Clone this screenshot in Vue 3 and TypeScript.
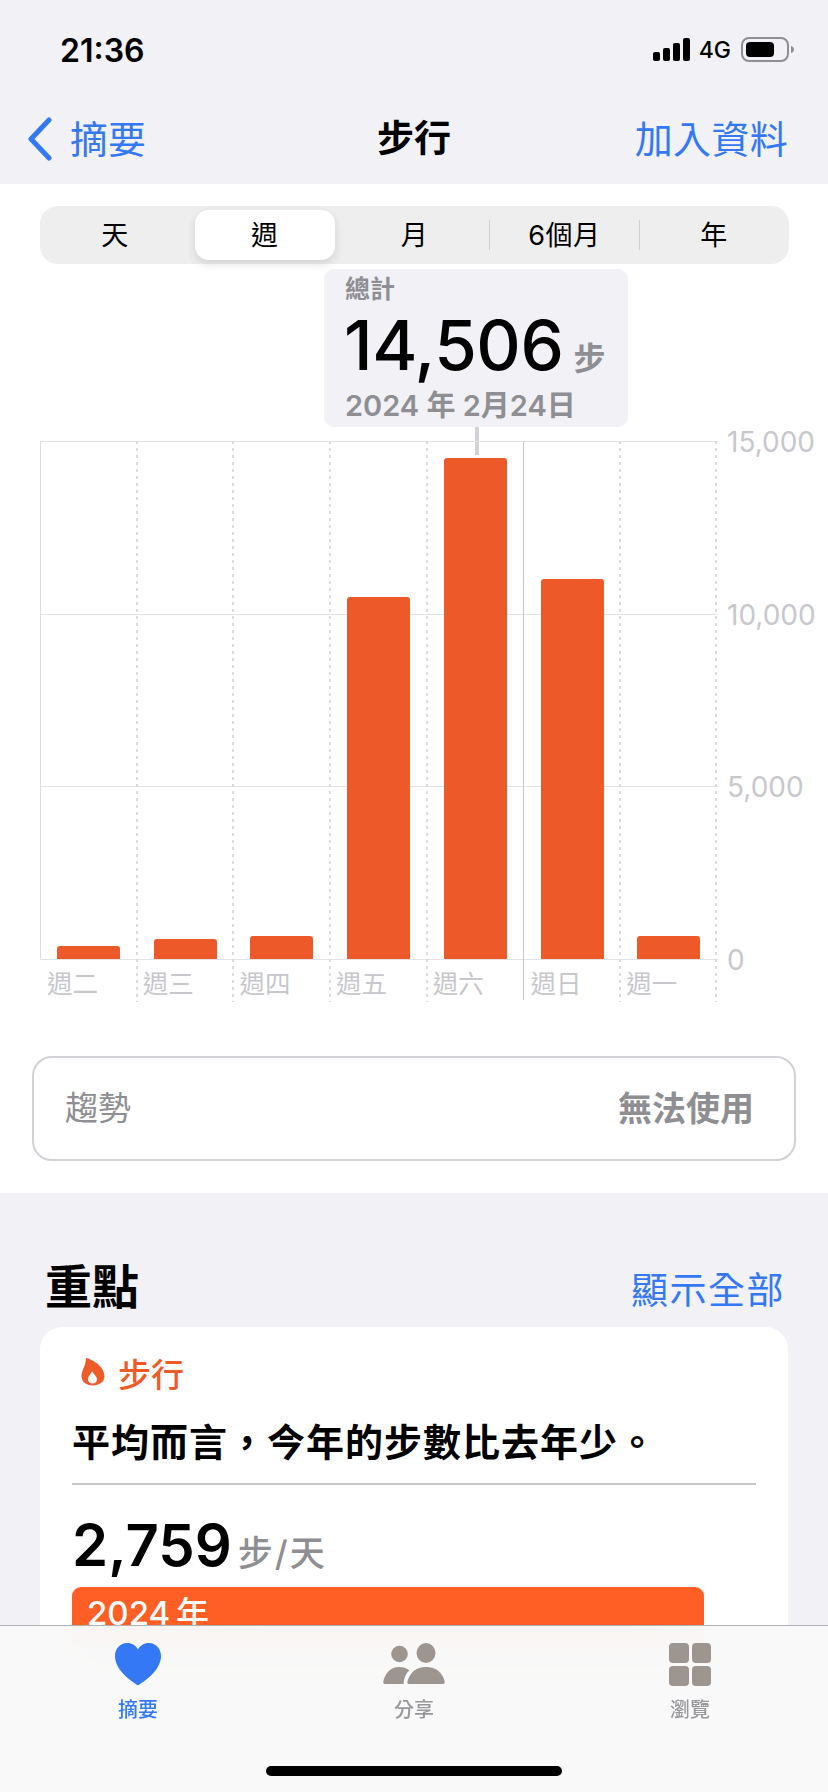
<template>
  <div class="phone">
    <header class="top">
      <div class="status">
        <span class="time">21:36</span>
        <div class="status-right">
          <svg class="signal" width="37" height="24" viewBox="0 0 37 24">
            <rect x="0" y="14" width="7" height="9" rx="2" />
            <rect x="10" y="10" width="7" height="13" rx="2" />
            <rect x="20" y="5" width="7" height="18" rx="2" />
            <rect x="30" y="0" width="7" height="23" rx="2" />
          </svg>
          <span class="net">4G</span>
          <svg class="battery" width="54" height="26" viewBox="0 0 54 26">
            <rect x="1" y="1" width="46" height="23" rx="7" fill="none" stroke="#8e8e93" stroke-width="2" />
            <rect x="5" y="5" width="28" height="15" rx="4" fill="#000" />
            <path d="M50 9c2 .6 3 2 3 3.500s-1 3-3 3.500z" fill="#8e8e93" />
          </svg>
        </div>
      </div>
      <nav class="nav">
        <div class="back">
          <svg width="27" height="44" viewBox="0 0 27 44">
            <path d="M23 3 5 22l18 19" fill="none" stroke="#3478f6" stroke-width="5" stroke-linecap="round" stroke-linejoin="round" />
          </svg>
          <span>摘要</span>
        </div>
        <strong class="nav-title">步行</strong>
        <span class="nav-action">加入資料</span>
      </nav>
    </header>

    <section class="chart-section">
      <div class="segments">
        <div
          v-for="(seg, i) in segments"
          :key="seg"
          class="seg"
          :class="{ active: i === 1, divided: i === 3 || i === 4 }"
        >
          <span>{{ seg }}</span>
        </div>
      </div>

      <div class="tooltip">
        <div class="tip-label">總計</div>
        <div class="tip-value">14,506<span class="tip-unit">步</span></div>
        <div class="tip-date">2024 年 2月24日</div>
      </div>

      <div class="chart">
        <div
          v-for="tick in ticks"
          :key="tick"
          class="gridline"
          :style="{ top: plotHeight - (tick / maxSteps) * plotHeight + 'px' }"
        >
          <span class="tick">{{ tick.toLocaleString('en-US') }}</span>
        </div>
        <div
          v-for="(day, i) in days"
          :key="day.label"
          class="col"
          :class="{ first: i === 0, sunday: i === 5 }"
        >
          <div class="plot">
            <div class="bar" :style="{ height: (day.steps / maxSteps) * plotHeight + 'px' }"></div>
          </div>
          <div class="day">{{ day.label }}</div>
        </div>
      </div>

      <div class="trend">
        <span class="trend-name">趨勢</span>
        <span class="trend-state">無法使用</span>
      </div>
    </section>

    <section class="highlights">
      <div class="hl-head">
        <h2>重點</h2>
        <span class="show-all">顯示全部</span>
      </div>
      <div class="card">
        <div class="card-tag">
          <svg width="24" height="30" viewBox="0 0 24 30">
            <path
              fill="#ef5a29"
              fill-rule="evenodd"
              d="M5 0C10 1 23 7 23.500 18c0 6-5.500 9.500-11.500 9.500C5.500 27.500.5 24 .5 18 .5 12 5 8 5 0zm6 13c-.5 3-4 5-4 8 0 3 2 4.500 4.500 4.500S16 24 16 21c0-3-4-5-5-8z"
            />
          </svg>
          <span>步行</span>
        </div>
        <p class="card-text">平均而言，今年的步數比去年少。</p>
        <div class="card-rule"></div>
        <div class="card-value">2,759<span class="card-unit">步/天</span></div>
        <div class="year-bar">2024 年</div>
      </div>
    </section>

    <footer class="tabbar">
      <div class="tab active">
        <svg width="46" height="44" viewBox="0 0 46 44">
          <path
            fill="#3478f6"
            d="M23 43.500C21 42 0 30 0 14 0 6.500 5.500 1 12 1c5 0 9 2.500 11 6.500C25 3.500 29 1 34 1c6.500 0 12 5.500 12 13 0 16-21 28-23 29.500z"
          />
        </svg>
        <span>摘要</span>
      </div>
      <div class="tab">
        <svg width="62" height="44" viewBox="0 0 62 44">
          <circle cx="16.500" cy="12" r="8.300" />
          <ellipse cx="43" cy="11" rx="9.500" ry="10" />
          <path d="M2 42c-1.500 0-2-1-1.700-2.500C2 31 8 25 16 25c4 0 8 1 10.500 3.500C23 31 21 36 20.500 42z" />
          <path d="M26 42c-1.500 0-2-1-1.500-2.500C26.500 31 33 25 43 25s17 6 18.700 14.500c.3 1.500-.2 2.500-1.700 2.500z" />
        </svg>
        <span>分享</span>
      </div>
      <div class="tab">
        <svg width="44" height="44" viewBox="0 0 44 44">
          <rect x="1" y="1" width="20" height="20" rx="4" />
          <rect x="24" y="1" width="19" height="20" rx="4" />
          <rect x="1" y="24" width="20" height="20" rx="4" />
          <rect x="24" y="24" width="19" height="20" rx="4" />
        </svg>
        <span>瀏覽</span>
      </div>
      <div class="home-bar"></div>
    </footer>
  </div>
</template>

<script setup lang="ts">
const segments = ['天', '週', '月', '6個月', '年']

const maxSteps = 15000
const plotHeight = 518
const ticks = [15000, 10000, 5000, 0]

const days = [
  { label: '週二', steps: 376 },
  { label: '週三', steps: 579 },
  { label: '週四', steps: 666 },
  { label: '週五', steps: 10483 },
  { label: '週六', steps: 14506 },
  { label: '週日', steps: 11000 },
  { label: '週一', steps: 666 }
]
</script>

<style>
html,
body {
  margin: 0;
  background: #f2f2f7;
}
</style>

<style scoped>
.phone {
  position: relative;
  width: 828px;
  height: 1792px;
  overflow: hidden;
  background: #f1f1f6;
  font-family: Inter, 'Noto Sans CJK TC', 'Noto Sans CJK SC', sans-serif;
  color: #000;
}
.top {
  height: 184px;
}
.status {
  display: flex;
  justify-content: space-between;
  align-items: center;
  height: 50px;
  padding: 25px 33px 0 60px;
}
.time {
  font-size: 32px;
  font-weight: 600;
}
.status-right {
  display: flex;
  align-items: center;
  gap: 7px;
}
.signal {
  fill: #000;
}
.net {
  font-size: 23px;
  font-weight: 500;
  margin: 0 3px 0 2px;
}
.nav {
  position: relative;
  display: flex;
  justify-content: space-between;
  align-items: center;
  height: 44px;
  margin-top: 39px;
  padding: 0 40px 0 26px;
  font-size: 38px;
  color: #3478f6;
}
.back {
  display: flex;
  align-items: center;
  gap: 17px;
}
.back svg {
  margin-top: 6px;
}
.nav-title {
  position: absolute;
  left: 0;
  right: 0;
  text-align: center;
  color: #000;
  font-weight: 700;
  font-size: 37px;
}
.nav-action {
  letter-spacing: 0.3px;
}
.chart-section {
  height: 1009px;
  background: #fff;
  overflow: hidden;
}
.segments {
  display: grid;
  grid-template-columns: repeat(5, 1fr);
  width: 749px;
  height: 58px;
  margin: 22px 0 0 40px;
  background: #eeeeef;
  border-radius: 18px;
}
.seg {
  position: relative;
  display: flex;
  align-items: center;
  justify-content: center;
  font-size: 27px;
  letter-spacing: 0.5px;
  margin: 4px 5px;
  border-radius: 14px;
}
.seg span {
  margin-top: -4px;
}
.seg.active {
  background: #fff;
  box-shadow: 0 4px 10px rgba(0, 0, 0, 0.12);
}
.seg.divided::before {
  content: '';
  position: absolute;
  left: -5px;
  top: 10px;
  bottom: 10px;
  width: 1px;
  background: #cfcfd2;
}
.tooltip {
  position: relative;
  box-sizing: border-box;
  width: 304px;
  height: 158px;
  margin: 5px 0 0 324px;
  padding: 3px 0 0 20px;
  background: #f1f1f6;
  border-radius: 10px;
}
.tooltip::after {
  content: '';
  position: absolute;
  left: 151px;
  top: 100%;
  width: 4px;
  height: 28px;
  background: #d1d1d6;
}
.tip-label {
  font-size: 25px;
  line-height: 34px;
  font-weight: 600;
  margin-left: 1px;
  color: #8e8e93;
}
.tip-value {
  font-size: 69px;
  line-height: 76px;
  margin-top: 1px;
  font-weight: 500;
  letter-spacing: -0.5px;
}
.tip-unit {
  font-size: 32px;
  font-weight: 600;
  color: #8e8e93;
  margin-left: 10px;
}
.tip-date {
  font-size: 29px;
  line-height: 36px;
  margin: -9px 0 0 1px;
  font-weight: 600;
  color: #8e8e93;
}
.chart {
  position: relative;
  display: grid;
  grid-template-columns: repeat(7, 96.7px);
  width: 677px;
  height: 556px;
  margin: 14px 0 0 40px;
}
.gridline {
  position: absolute;
  left: 0;
  width: 678px;
  height: 1px;
  background: #e3e3e6;
}
.tick {
  position: absolute;
  left: 687px;
  top: -16px;
  font-size: 28px;
  line-height: 34px;
  color: #c7c7cc;
}
.col {
  position: relative;
}
.col::before,
.col:last-child::after {
  content: '';
  position: absolute;
  top: 0;
  bottom: 0;
  width: 2px;
  background: repeating-linear-gradient(#dcdce0 0 3px, transparent 3px 7px);
}
.col::before {
  left: -1px;
}
.col:last-child::after {
  left: 95px;
}
.col.first::before,
.col.sunday::before {
  display: none;
}
.col.first {
  border-left: 1px solid #dcdce0;
  height: 518px;
}
.col.sunday {
  border-left: 1px solid #c7c7cc;
  height: 559px;
}
.plot {
  display: flex;
  align-items: flex-end;
  justify-content: center;
  height: 518px;
}
.bar {
  position: relative;
  width: 63px;
  background: #ee592a;
  border-radius: 3px 3px 0 0;
}
.day {
  padding: 7px 0 0 6px;
  font-size: 25.500px;
  line-height: 36px;
  color: #c7c7cc;
  white-space: nowrap;
}
.trend {
  display: flex;
  justify-content: space-between;
  align-items: center;
  box-sizing: border-box;
  width: 764px;
  height: 105px;
  margin: 59px 0 0 32px;
  padding: 0 40px 5px 31px;
  border: 2px solid #d1d1d6;
  border-radius: 20px;
  font-size: 33px;
  color: #8e8e93;
}
.trend-state {
  font-size: 34px;
  font-weight: 600;
}
.highlights {
  padding: 54px 40px 0;
}
.hl-head {
  display: flex;
  justify-content: space-between;
  align-items: center;
  box-sizing: border-box;
  height: 80px;
  padding: 0 3px 8px 5px;
}
h2 {
  margin: 0;
  font-size: 47px;
  font-weight: 700;
}
.show-all {
  font-size: 37px;
  color: #3478f6;
  letter-spacing: 1.500px;
  margin-top: 10px;
}
.card {
  height: 500px;
  padding: 24px 32px 0;
  background: #fff;
  border-radius: 22px;
}
.card-tag {
  display: flex;
  align-items: center;
  gap: 13px;
  margin-left: 9px;
  height: 44px;
  font-size: 33px;
  font-weight: 500;
  color: #ef5a29;
}
.card-text {
  margin: 20px 0 0;
  font-size: 38px;
  letter-spacing: 1px;
  line-height: 54px;
  font-weight: 600;
  white-space: nowrap;
}
.card-rule {
  height: 2px;
  margin-top: 14px;
  background: #c8c8cc;
}
.card-value {
  margin-top: 25px;
  font-size: 58px;
  line-height: 70px;
  font-weight: 600;
}
.card-unit {
  margin-left: 6px;
  font-size: 35px;
  font-weight: 500;
  letter-spacing: 2px;
  color: #8e8e93;
}
.year-bar {
  width: 632px;
  height: 60px;
  margin-top: -1px;
  padding-left: 15px;
  box-sizing: border-box;
  background: #ff5e25;
  border-radius: 9px 9px 0 0;
  color: #fff;
  font-size: 33px;
  font-weight: 500;
  line-height: 52px;
  word-spacing: -3px;
}
.tabbar {
  position: absolute;
  left: 0;
  right: 0;
  top: 1625px;
  bottom: 0;
  display: grid;
  grid-template-columns: repeat(3, 276px);
  border-top: 1px solid #b2b2b6;
  background: rgba(249, 249, 249, 0.97);
  backdrop-filter: blur(30px);
}
.tab {
  display: flex;
  flex-direction: column;
  align-items: center;
  padding-top: 16px;
  font-size: 20px;
  font-weight: 500;
  line-height: 30px;
  color: #98989c;
  fill: #9c9590;
}
.tab svg {
  margin-bottom: 9px;
}
.tab.active {
  color: #3478f6;
}
.home-bar {
  position: absolute;
  left: 266px;
  top: 140px;
  width: 296px;
  height: 10px;
  background: #000;
  border-radius: 5px;
}
</style>
